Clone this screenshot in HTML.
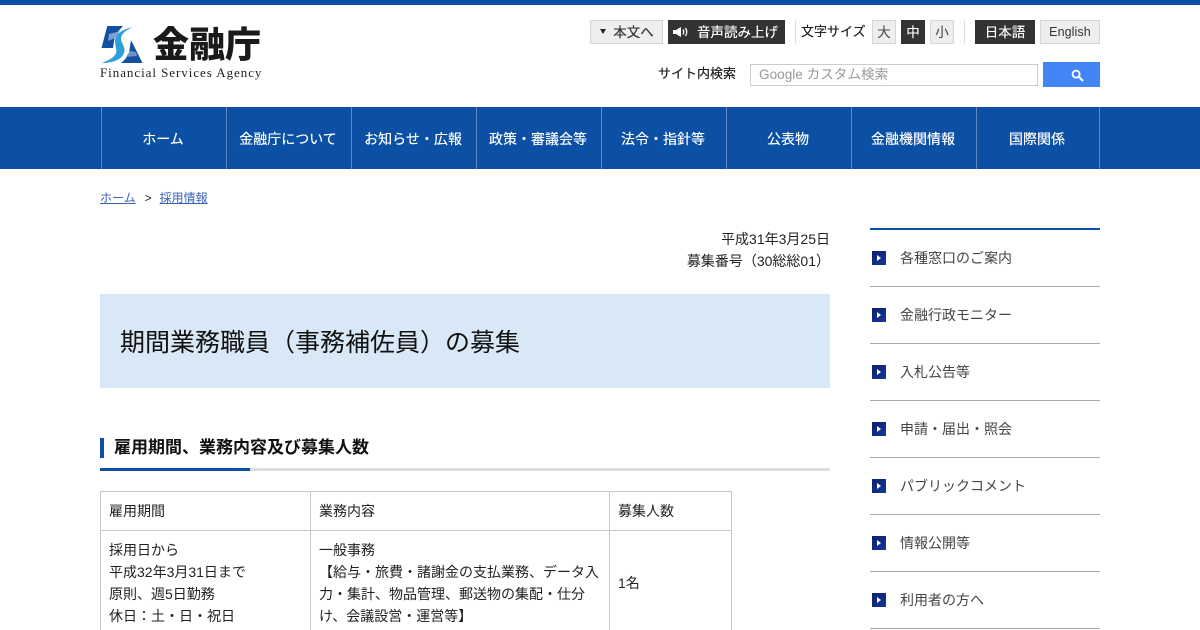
<!DOCTYPE html>
<html lang="ja"><head><meta charset="utf-8"><title>期間業務職員（事務補佐員）の募集</title>
<style>
html,body{margin:0;padding:0;background:#fff;width:1200px;height:630px;overflow:hidden}
body{position:relative;font-family:"Liberation Sans","Noto Sans CJK JP",sans-serif;font-size:14px;color:#222}
.a{position:absolute;white-space:nowrap}
.btn{position:absolute;top:20px;height:24px;line-height:23px;text-align:center;font-size:13.500px;box-sizing:border-box;border:1px solid #d5d5d5;background:#eee;color:#333;white-space:nowrap;text-shadow:0 0 .4px currentColor}
.dk{background:#333;border-color:#333;color:#fff}
.nav{position:absolute;left:0;top:107px;width:1200px;height:62px;background:#0b50a5}
.nav div{position:absolute;top:0;height:62px;width:125px;line-height:64px;text-align:center;color:#fff;font-size:14px;text-shadow:0 0 .4px #fff;border-left:1px solid #5f88bf;box-sizing:border-box;padding-right:2px}
.side{position:absolute;left:870px;width:230px;height:57px;border-bottom:1px solid #aaa;box-sizing:border-box}
.side i{position:absolute;left:2px;top:21px;width:14px;height:14px;background:linear-gradient(135deg,#0a1f6e,#14389a)}
.side i:after{content:"";position:absolute;left:5px;top:4px;border-left:4px solid #fff;border-top:3px solid transparent;border-bottom:3px solid transparent}
.side span{position:absolute;left:30px;top:18px;line-height:20px;color:#444;font-size:14px;white-space:nowrap}
.tb{position:absolute;border:1px solid #c8c8c8;box-sizing:border-box;padding-left:8px;line-height:22px;color:#222}
</style></head><body>
<div class="a" style="left:0;top:0;width:1200px;height:5px;background:#0b50a5"></div>
<svg class="a" style="left:100px;top:25px" width="44" height="40" viewBox="0 0 44 40">
<path d="M7.300 1H23L15 10L13 23H1.500Z" fill="#13509f"/>
<path d="M31 15L42.500 38H21Q27 33 29 28Z" fill="#13509f"/>
<path d="M9 9L20 6L15 13L8 16Z" fill="#7f9fd0"/>
<path d="M30 26L36 27L37 31L26 32Z" fill="#6f93c8"/>
<path d="M33 2C23 4 15 9 15 16C15 22 18 26 15 30C12 34 6 36 2 38C14 38 22 34 24 28C26 22 21 18 21 14C21 9 26 5 33 2Z" fill="#2ea0da"/>
</svg>
<div class="a" style="left:153px;top:20px;font-size:36px;line-height:50px;font-weight:900;color:#1a1a1a">金融庁</div>
<div class="a" style="left:100px;top:65px;font-family:'Liberation Serif',serif;font-size:13px;line-height:16px;letter-spacing:.95px;color:#222">Financial Services Agency</div>

<div class="btn" style="left:590px;width:73px;padding-left:14px">本文へ</div>
<div class="a" style="left:600px;top:29px;border-top:5px solid #222;border-left:3.500px solid transparent;border-right:3.500px solid transparent"></div>
<div class="btn dk" style="left:668px;width:117px;padding-left:22px">音声読み上げ</div>
<svg class="a" style="left:673px;top:27px" width="17" height="10" viewBox="0 0 17 10"><path d="M0 3H3L8 0V10L3 7H0Z" fill="#fff"/><path d="M10 2.500Q11.500 5 10 7.500M12.500 1Q15 5 12.500 9" stroke="#fff" stroke-width="1.300" fill="none"/></svg>
<div class="a" style="left:795px;top:20px;width:1px;height:24px;background:#ddd"></div>
<div class="a" style="left:801px;top:21px;line-height:22px;font-size:13px;text-shadow:0 0 .4px #222;color:#222">文字サイズ</div>
<div class="btn" style="left:872px;width:24px;color:#555">大</div>
<div class="btn dk" style="left:901px;width:24px">中</div>
<div class="btn" style="left:930px;width:24px;color:#555">小</div>
<div class="a" style="left:964px;top:20px;width:1px;height:24px;background:#ddd"></div>
<div class="btn dk" style="left:975px;width:60px">日本語</div>
<div class="btn" style="left:1040px;width:60px;font-size:12.500px;letter-spacing:.1px;text-shadow:none">English</div>

<div class="a" style="left:658px;top:64px;line-height:20px;font-size:13px;text-shadow:0 0 .4px #222;color:#222">サイト内検索</div>
<div class="a" style="left:750px;top:64px;width:288px;height:22px;border:1px solid #ccc;box-sizing:border-box;line-height:19px;padding-left:8px;font-size:13.600px;color:#999">Google カスタム検索</div>
<div class="a" style="left:1043px;top:62px;width:57px;height:25px;background:#4285f4"></div>
<svg class="a" style="left:1071px;top:69px" width="13" height="13" viewBox="0 0 14 14"><circle cx="5.500" cy="5.500" r="3.800" stroke="#fff" stroke-width="2" fill="none"/><path d="M8.500 8.500L13 13" stroke="#fff" stroke-width="2.200"/></svg>

<div class="nav">
<div style="left:101px">ホーム</div>
<div style="left:226px">金融庁について</div>
<div style="left:351px">お知らせ・広報</div>
<div style="left:476px">政策・審議会等</div>
<div style="left:601px">法令・指針等</div>
<div style="left:726px">公表物</div>
<div style="left:851px">金融機関情報</div>
<div style="left:976px;width:124px;border-right:1px solid #5f88bf">国際関係</div>
</div>

<div class="a" style="left:100px;top:189px;font-size:12px;line-height:18px;color:#222"><span style="color:#3a62b5;text-decoration:underline">ホーム</span><span style="margin:0 8px 0 9px">&gt;</span><span style="color:#3a62b5;text-decoration:underline">採用情報</span></div>

<div class="a" style="right:370px;top:228px;line-height:22px;text-align:right">平成31年3月25日<br>募集番号（30総総01）</div>
<div class="a" style="left:100px;top:294px;width:730px;height:94px;background:#d8e8f7"></div>
<div class="a" style="left:120px;top:323px;font-size:25px;line-height:40px;color:#111">期間業務職員（事務補佐員）の募集</div>

<div class="a" style="left:100px;top:438px;width:4px;height:20px;background:#0b50a5"></div>
<div class="a" style="left:114px;top:435px;font-size:17px;line-height:26px;font-weight:bold;color:#111">雇用期間、業務内容及び募集人数</div>
<div class="a" style="left:100px;top:468px;width:730px;height:3px;background:#ddd"></div>
<div class="a" style="left:100px;top:468px;width:150px;height:3px;background:#0b50a5"></div>

<div class="tb" style="left:100px;top:491px;width:211px;height:40px;padding-top:8px">雇用期間</div>
<div class="tb" style="left:310px;top:491px;width:300px;height:40px;padding-top:8px">業務内容</div>
<div class="tb" style="left:609px;top:491px;width:123px;height:40px;padding-top:8px">募集人数</div>
<div class="tb" style="left:100px;top:530px;width:211px;height:120px;padding-top:8px">採用日から<br>平成32年3月31日まで<br>原則、週5日勤務<br>休日：土・日・祝日</div>
<div class="tb" style="left:310px;top:530px;width:300px;height:120px;padding-top:8px">一般事務<br>【給与・旅費・諸謝金の支払業務、データ入<br>力・集計、物品管理、郵送物の集配・仕分<br>け、会議設営・運営等】</div>
<div class="tb" style="left:609px;top:530px;width:123px;height:120px;padding-top:41px">1名</div>

<div class="a" style="left:870px;top:228px;width:230px;height:2px;background:#0b50a5"></div>
<div class="side" style="top:230px"><i></i><span>各種窓口のご案内</span></div>
<div class="side" style="top:287px"><i></i><span>金融行政モニター</span></div>
<div class="side" style="top:344px"><i></i><span>入札公告等</span></div>
<div class="side" style="top:401px"><i></i><span>申請・届出・照会</span></div>
<div class="side" style="top:458px"><i></i><span>パブリックコメント</span></div>
<div class="side" style="top:515px"><i></i><span>情報公開等</span></div>
<div class="side" style="top:572px"><i></i><span>利用者の方へ</span></div>
</body></html>
